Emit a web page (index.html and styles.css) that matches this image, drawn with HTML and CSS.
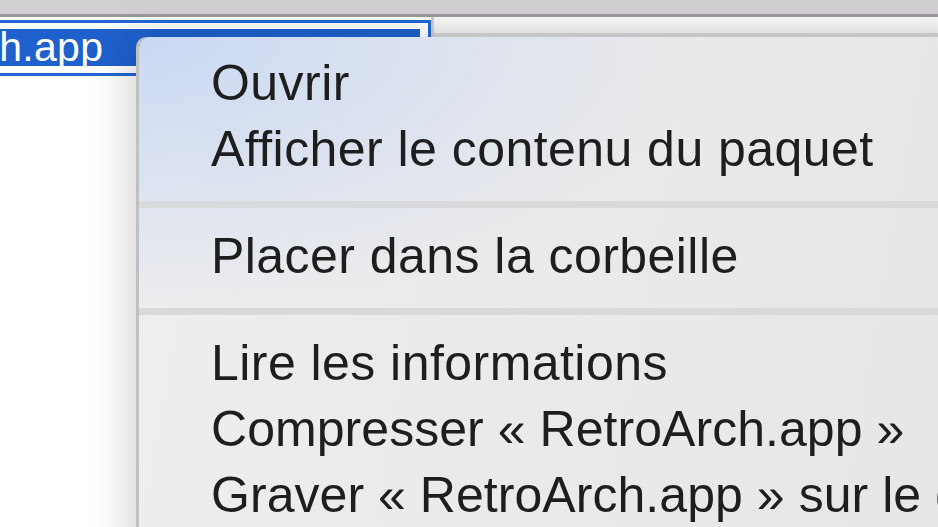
FILE: index.html
```html
<!DOCTYPE html>
<html lang="fr">
<head>
<meta charset="UTF-8">
<title>Menu contextuel</title>
<link rel="stylesheet" href="styles.css">
</head>
<body>
<div class="toolbar"></div>
<div class="list">
    <div class="list-head">
        <div class="sel-ring">
            <div class="sel-fill"><span class="sel-name">RetroArch.app</span></div>
        </div>
        <div class="col-split"></div>
        <div class="head-rest"></div>
    </div>

    <!-- menu contextuel par-dessus la liste -->
    <div class="menu">
        <div class="item">Ouvrir</div>
        <div class="item">Afficher le contenu du paquet</div>
        <div class="sep"></div>
        <div class="item">Placer dans la corbeille</div>
        <div class="sep"></div>
        <div class="item">Lire les informations</div>
        <div class="item tight">Compresser « RetroArch.app »</div>
        <div class="item tight">Graver « RetroArch.app » sur le disque…</div>
    </div>
</div>
</body>
</html>
```

FILE: styles.css
```css
html, body {
  margin: 0;
  padding: 0;
  height: 100%;
  overflow: hidden;
}
body {
  font-family: 'Liberation Sans', Arial, sans-serif;
  background-color: #fff;
}
.toolbar {
  height: 14px;
  background-color: #d1cfd1;
  border-bottom: 3px solid #9a9a9a;
}
.list {
  position: relative;
  height: 510px;
  background-color: #fff;
}
.list-head {
  display: flex;
  align-items: flex-start;
}
.sel-ring {
  width: 420px;
  margin-top: 3px;
  padding: 6px 8px 7px 0;
  border: 3px solid #2267d5;
  border-left: none;
}
.sel-fill {
  height: 37px;
  background-color: #1e61cd;
  overflow: hidden;
  white-space: nowrap;
}
.sel-name {
  display: inline-block;
  margin-left: -165px;
  color: #fff;
  font-size: 41px;
  line-height: 37px;
  letter-spacing: 0.3px;
}
.col-split {
  width: 3px;
  height: 20px;
  background-color: #cfcfcf;
}
.head-rest {
  flex: 1;
  height: 16px;
  background: linear-gradient(#fafafa, #f1f1f1);
  border-bottom: 4px solid #d5d5d5;
}
.menu {
  position: absolute;
  left: 139px;
  top: 20px;
  right: -40px;
  bottom: -40px;
  padding: 13px 0 0 0;
  border-top-left-radius: 10px;
  background:
    radial-gradient(ellipse 560px 280px at 0 0, #c9d8f3, rgba(236,236,236,0) 100%),
    linear-gradient(100deg, #eeeeee, #e6e6e6);
  box-shadow: -3px 0 0 #c0c0c0, -12px 0 40px rgba(0,0,0,0.16);
  color: #1e1e1e;
}
.item {
  font-size: 50px;
  line-height: 66px;
  height: 66px;
  padding-left: 72px;
  letter-spacing: 0.45px;
  white-space: nowrap;
}
.item.tight {
  letter-spacing: 0.05px;
}
.sep {
  height: 7px;
  margin: 19px 0 15px;
  background-color: #d8d9db;
}
```
